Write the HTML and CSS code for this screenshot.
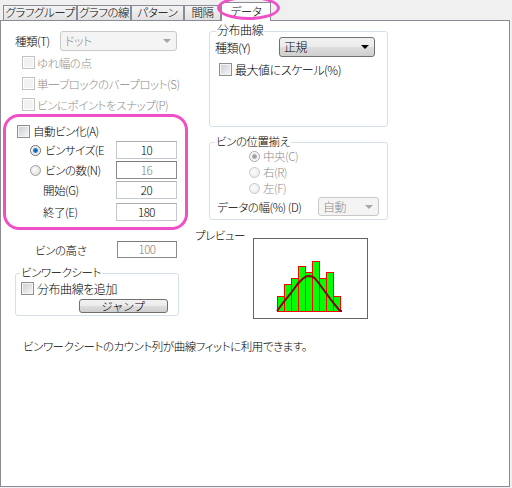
FILE: index.html
```html
<!DOCTYPE html>
<html lang="ja">
<head>
    <meta charset="UTF-8">
    <title>データ</title>
    <link rel="stylesheet" href="styles.css">
</head>
<body>

<div class="tabs">
    <div class="tab t1">グラフグループ</div>
    <div class="tab t2">グラフの線</div>
    <div class="tab t3">パターン</div>
    <div class="tab t4">間隔</div>
    <div class="tab active">データ</div>
    <span class="tab-mark"></span>
</div>

<div class="panel">
    <div class="cols">
        <!-- 左側 -->
        <div class="col-left">
            <div class="type-row">
                <span class="type-label">種類(T)</span>
                <div class="combo disabled"><span>ドット</span><i class="arrow"></i></div>
            </div>

            <div class="checks">
                <div class="check-row dis"><span class="cb off"></span>ゆれ幅の点</div>
                <div class="check-row dis"><span class="cb off"></span>単一ブロックのバープロット(S)</div>
                <div class="check-row dis"><span class="cb off"></span>ビンにポイントをスナップ(P)</div>
            </div>

            <div class="pink">
                <div class="auto-row"><span class="cb"></span>自動ビン化(A)</div>
                <div class="bin-row">
                    <span class="bin-label"><span class="rb on"></span>ビンサイズ(E</span>
                    <span class="field">10</span>
                </div>
                <div class="bin-row">
                    <span class="bin-label"><span class="rb"></span>ビンの数(N)</span>
                    <span class="field ro">16</span>
                </div>
                <div class="bin-row">
                    <span class="bin-label indent">開始(G)</span>
                    <span class="field">20</span>
                </div>
                <div class="bin-row last">
                    <span class="bin-label indent">終了(E)</span>
                    <span class="field">180</span>
                </div>
            </div>

            <div class="height-row">
                <span class="height-label">ビンの高さ</span>
                <span class="field ro small">100</span>
            </div>

            <fieldset class="group ws">
                <legend>ビンワークシート</legend>
                <div class="ws-check"><span class="cb"></span>分布曲線を追加</div>
                <button class="jump">ジャンプ</button>
            </fieldset>
        </div>

        <!-- 右側 -->
        <div class="col-right">
            <fieldset class="group dist">
                <legend>分布曲線</legend>
                <div class="dist-type">
                    <span class="dist-label">種類(Y)</span>
                    <div class="combo"><span>正規</span><i class="arrow"></i></div>
                </div>
                <div class="dist-check"><span class="cb"></span>最大値にスケール(%)</div>
            </fieldset>

            <fieldset class="group align">
                <legend>ビンの位置揃え</legend>
                <div class="radio-row dis"><span class="rb on dim"></span>中央(C)</div>
                <div class="radio-row dis"><span class="rb dim"></span>右(R)</div>
                <div class="radio-row dis"><span class="rb dim"></span>左(F)</div>
                <div class="width-row">
                    <span class="width-label">データの幅(%) (D)</span>
                    <div class="combo disabled small"><span>自動</span><i class="arrow"></i></div>
                </div>
            </fieldset>

            <div class="preview-row">
                <span class="preview-label">プレビュー</span>
                <div class="preview">
                    <svg width="113" height="79" viewBox="0 0 113 79">
                        <g fill="#00ff00" stroke="#ff0000" stroke-width="1">
                            <rect x="23.5" y="57.5" width="7" height="15"/>
                            <rect x="30.5" y="45.5" width="7" height="27"/>
                            <rect x="37.5" y="39.5" width="7" height="33"/>
                            <rect x="44.5" y="27.5" width="7" height="45"/>
                            <rect x="51.5" y="33.5" width="7" height="39"/>
                            <rect x="58.5" y="22.5" width="7" height="50"/>
                            <rect x="65.5" y="39.5" width="7" height="33"/>
                            <rect x="72.5" y="33.5" width="7" height="39"/>
                            <rect x="79.5" y="57.5" width="7" height="15"/>
                        </g>
                        <path d="M23 72 L30 62.5 L37 54 L44 44.5 L49 39.5 L52 37.5 L55 37 L58 37.5 L61 39.5 L65 44.5 L72 54 L79 63.5 L86 72 L88 72"
                              fill="none" stroke="#8b0016" stroke-width="2"/>
                    </svg>
                </div>
            </div>
        </div>
    </div>

    <p class="note">ビンワークシートのカウント列が曲線フィットに利用できます。</p>
</div>

</body>
</html>
```

FILE: styles.css
```css
* {
    box-sizing: border-box;
}
body {
    margin: 0;
    width: 512px;
    height: 488px;
    overflow: hidden;
    background-color: #f0f0f0;
    font-family: "Noto Sans CJK JP", sans-serif;
    font-size: 11.5px;
    font-weight: 300;
    font-feature-settings: "palt";
    letter-spacing: -0.45px;
    color: #000;
    white-space: nowrap;
}

/* タブ */
.tabs {
    position: relative;
    z-index: 1;
    display: flex;
    align-items: flex-end;
    height: 20px;
    padding-left: 3px;
}
.tab {
    height: 15px;
    border: 1px solid #898c95;
    border-bottom: none;
    background: linear-gradient(#f3f3f3, #e2e2e2);
    line-height: 13px;
    text-align: center;
}
.t1 { width: 74px; }
.t2 { width: 54px; }
.t3 { width: 53px; }
.t4 { width: 37px; }
.tab.active {
    width: 50px;
    height: 19px;
    margin-bottom: -1px;
    background: #fff;
    line-height: 16px;
}
.tab-mark {
    position: absolute;
    left: 217px;
    top: -4px;
    width: 63px;
    height: 24px;
    border: 3px solid #f04fc6;
    border-radius: 50%;
}

/* パネル */
.panel {
    width: 510px;
    height: 467px;
    border: 1px solid #898c95;
    background-color: #fff;
}
.cols {
    display: grid;
    grid-template-columns: 193px 1fr;
}

/* 共通部品 */
.cb {
    display: inline-block;
    flex: none;
    width: 13px;
    height: 13px;
    border: 1px solid #8e8f8f;
    box-shadow: inset 0 0 0 1px #f4f4f4;
    background: linear-gradient(135deg, #c9cdd2, #f7f7f7);
}
.cb.off {
    border-color: #c2c2c2;
    box-shadow: inset 0 0 0 1px #fff;
    background: #f2f2f2;
}
.rb {
    display: inline-block;
    flex: none;
    width: 11px;
    height: 11px;
    border: 1px solid #a0a0a0;
    border-radius: 50%;
    background: radial-gradient(circle at 40% 40%, #fdfdfd, #d6d6d6);
}
.rb.on {
    border-color: #6b6b6b;
    background: radial-gradient(circle, #0b4f8c 0, #2c8ad8 2px, #e8e8e8 3px, #f8f8f8 4px);
}
.rb.dim {
    border-color: #c8c8c8;
    background: radial-gradient(circle at 40% 40%, #fdfdfd, #e6e6e6);
}
.rb.on.dim {
    border-color: #a8a8a8;
    background: radial-gradient(circle, #8c8c8c 0, #b4b4b4 2px, #f0f0f0 3px, #fafafa 4px);
}
.dis {
    color: #8d8d8d;
}
.field {
    display: inline-block;
    width: 61px;
    height: 18px;
    border: 1px solid #c3c8d0;
    border-top-color: #abadb3;
    background: #fff;
    line-height: 16px;
    text-align: center;
}
.field.ro {
    border-color: #8a8a8a;
    border-top-color: #7a7a7a;
    color: #7d7d7d;
}
.field.small {
    width: 60px;
    height: 17px;
    line-height: 15px;
}
.combo {
    position: relative;
    height: 20px;
    border: 1px solid #707070;
    border-radius: 3px;
    background: linear-gradient(#f2f2f2 0, #ebebeb 50%, #dddddd 51%, #cfcfcf 100%);
    line-height: 18px;
    padding-left: 4px;
    font-size: 12px;
}
.combo .arrow {
    position: absolute;
    right: 5px;
    top: 7px;
    border-left: 4px solid transparent;
    border-right: 4px solid transparent;
    border-top: 4px solid #000;
}
.combo.disabled {
    border-color: #c9c9c9;
    background: #f4f4f4;
    color: #8d8d8d;
}
.combo.disabled .arrow {
    border-top-color: #a6a6a6;
}
.group {
    margin: 0;
    padding: 0;
    min-width: 0;
    border: 1px solid #d5dfe5;
    border-radius: 3px;
}
.group legend {
    padding: 0 1px 2px;
    line-height: 12px;
}

/* 左側 */
.type-row {
    display: flex;
    align-items: center;
    margin-top: 10px;
    height: 20px;
    padding-left: 14px;
}
.type-label {
    width: 45px;
}
.type-row .combo {
    width: 117px;
}
.checks {
    margin-top: 1px;
    padding-left: 21px;
}
.check-row {
    display: flex;
    align-items: center;
    gap: 2px;
    height: 21px;
}
.pink {
    margin: -1px 0 0 2px;
    width: 185px;
    height: 116px;
    border: 3px solid #f04fc6;
    border-radius: 16px;
    padding-top: 5px;
}
.auto-row {
    display: flex;
    align-items: center;
    gap: 3px;
    height: 18px;
    padding-left: 11px;
}
.bin-row {
    display: flex;
    align-items: center;
    height: 20px;
    padding-left: 24px;
}
.bin-row.last {
    margin-top: 2px;
}
.bin-label {
    display: flex;
    align-items: center;
    gap: 4px;
    width: 86px;
}
.bin-label.indent {
    padding-left: 13px;
}
.height-row {
    display: flex;
    align-items: center;
    margin-top: 10px;
    height: 19px;
    padding-left: 34px;
}
.height-label {
    width: 82px;
}
.ws {
    margin: 7px 0 0 14px;
    width: 164px;
    padding-bottom: 2px;
}
.ws legend {
    margin-left: 4px;
}
.ws-check {
    display: flex;
    align-items: center;
    gap: 3px;
    height: 17px;
    padding-left: 5px;
    font-size: 12px;
}
.jump {
    display: block;
    margin: 2px 0 0 63px;
    width: 89px;
    height: 14px;
    padding: 0;
    border: 1px solid #707070;
    border-radius: 3px;
    background: linear-gradient(#f2f2f2 0, #ebebeb 50%, #dddddd 51%, #cfcfcf 100%);
    font: inherit;
    letter-spacing: 1px;
    line-height: 12px;
    color: #000;
}

/* 右側 */
.dist {
    margin: 3px 0 0 15px;
    width: 179px;
    padding-bottom: 48px;
}
.dist legend {
    margin-left: 6px;
    font-size: 12px;
}
.dist-type {
    display: flex;
    align-items: center;
    margin-top: -1px;
    height: 20px;
    padding-left: 5px;
    font-size: 12px;
}
.dist-label {
    width: 64px;
}
.dist-type .combo {
    width: 96px;
}
.dist-check {
    display: flex;
    align-items: center;
    gap: 3px;
    margin-top: 3px;
    height: 18px;
    padding-left: 9px;
    font-size: 12px;
}
.align {
    margin: 8px 0 0 15px;
    width: 179px;
    padding-bottom: 3px;
}
.align legend {
    margin-left: 5px;
}
.radio-row {
    display: flex;
    align-items: center;
    gap: 3px;
    height: 14px;
    margin-bottom: 2px;
    padding-left: 39px;
}
.width-row {
    display: flex;
    align-items: center;
    height: 19px;
    padding-left: 7px;
}
.width-label {
    width: 101px;
}
.width-row .combo {
    width: 61px;
    height: 19px;
    line-height: 17px;
}
.preview-row {
    display: flex;
    align-items: flex-start;
    margin-top: 8px;
}
.preview-label {
    width: 59px;
    padding-left: 1px;
    line-height: 14px;
}
.preview {
    margin-top: 10px;
    width: 115px;
    height: 81px;
    border: 1px solid #646464;
}
.preview svg {
    display: block;
}

.note {
    margin: 20px 0 0;
    padding-left: 22px;
    line-height: 14px;
}
```
